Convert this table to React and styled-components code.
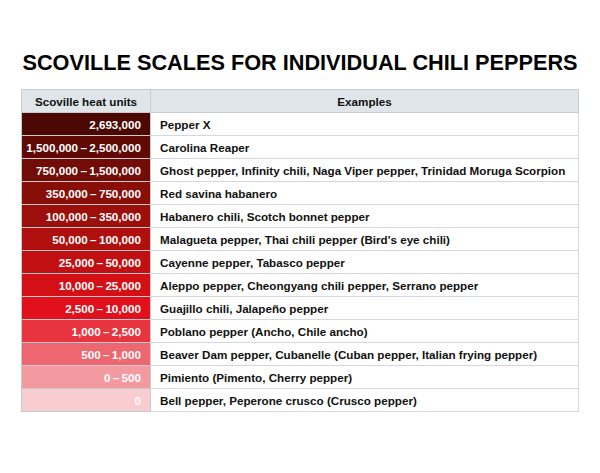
import React from "react";
import styled, { createGlobalStyle } from "styled-components";

const GlobalStyle = createGlobalStyle`
  body {
    margin: 0;
    background: #ffffff;
    font-family: "Liberation Sans", Arial, sans-serif;
  }
`;

const Page = styled.div`
  width: 600px;
  height: 473px;
  padding: 51px 21px 0;
  box-sizing: border-box;
`;

const Title = styled.h1`
  margin: 0 0 15px;
  text-align: center;
  font-size: 21.7px;
  font-weight: 700;
  color: #000;
  line-height: 23px;
  white-space: nowrap;
`;

const Table = styled.table`
  width: 100%;
  border-collapse: collapse;
  font-size: 11.65px;
  font-weight: 700;
`;

const HeadCell = styled.th`
  height: 22px;
  padding: 0;
  background: #dfe5e8;
  border: 1px solid #c8ccd1;
  color: #111;
  font-weight: 700;
  text-align: center;
  width: ${(p) => p.$width || "auto"};
`;

const HeatCell = styled.td`
  height: 22px;
  padding: 0 9px 0 4px;
  border: 1px solid #c8ccd1;
  background: ${(p) => p.$bg};
  color: #fff;
  text-align: right;
  white-space: nowrap;
`;

const ExampleCell = styled.td`
  height: 22px;
  padding: 0 9px;
  border: 1px solid #d4d7db;
  color: #111;
  text-align: left;
  white-space: nowrap;
`;

const rows = [
  ["2,693,000", "Pepper X", "#4c0904"],
  ["1,500,000\u2009\u2013\u20092,500,000", "Carolina Reaper", "#5f0a05"],
  ["750,000\u2009\u2013\u20091,500,000", "Ghost pepper, Infinity chili, Naga Viper pepper, Trinidad Moruga Scorpion", "#730c06"],
  ["350,000\u2009\u2013\u2009750,000", "Red savina habanero", "#880e08"],
  ["100,000\u2009\u2013\u2009350,000", "Habanero chili, Scotch bonnet pepper", "#9c0f0a"],
  ["50,000\u2009\u2013\u2009100,000", "Malagueta pepper, Thai chili pepper (Bird's eye chili)", "#b0100d"],
  ["25,000\u2009\u2013\u200950,000", "Cayenne pepper, Tabasco pepper", "#c21012"],
  ["10,000\u2009\u2013\u200925,000", "Aleppo pepper, Cheongyang chili pepper, Serrano pepper", "#d31016"],
  ["2,500\u2009\u2013\u200910,000", "Guajillo chili, Jalapeño pepper", "#e2101b"],
  ["1,000\u2009\u2013\u20092,500", "Poblano pepper (Ancho, Chile ancho)", "#e7343f"],
  ["500\u2009\u2013\u20091,000", "Beaver Dam pepper, Cubanelle (Cuban pepper, Italian frying pepper)", "#ed6670"],
  ["0\u2009\u2013\u2009500", "Pimiento (Pimento, Cherry pepper)", "#f39aa1"],
  ["0", "Bell pepper, Peperone crusco (Crusco pepper)", "#f9ccd0"],
];

const App = () => {
  return (
    <Page>
      <GlobalStyle />
      <Title>SCOVILLE SCALES FOR INDIVIDUAL CHILI PEPPERS</Title>
      <Table>
        <thead>
          <tr>
            <HeadCell $width="128px">Scoville heat units</HeadCell>
            <HeadCell>Examples</HeadCell>
          </tr>
        </thead>
        <tbody>
          {rows.map(([heat, examples, bg]) => (
            <tr key={heat}>
              <HeatCell $bg={bg}>{heat}</HeatCell>
              <ExampleCell>{examples}</ExampleCell>
            </tr>
          ))}
        </tbody>
      </Table>
    </Page>
  );
};

export default App;
